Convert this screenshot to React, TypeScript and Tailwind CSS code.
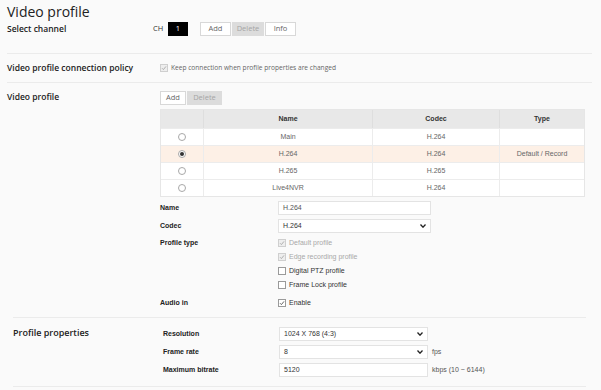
import React from 'react';

const sans = { fontFamily: '"Open Sans", "Noto Sans", sans-serif' };
const arial = { fontFamily: '"Liberation Sans", Arial, sans-serif' };

const Check: React.FC<{ checked?: boolean; disabled?: boolean }> = ({ checked, disabled }) => (
  <span
    className={`inline-flex items-center justify-center w-[8px] h-[8px] border ${
      disabled ? 'border-[#cfcfcf] bg-[#eeeeee]' : 'border-[#9a9a9a] bg-white'
    }`}
  >
    {checked && (
      <svg width="6" height="6" viewBox="0 0 6 6">
        <path d="M1 3.2 L2.4 4.6 L5 1.4" fill="none" stroke={disabled ? '#a8a8a8' : '#555'} strokeWidth="0.9" />
      </svg>
    )}
  </span>
);

const Radio: React.FC<{ on?: boolean }> = ({ on }) => (
  <span className="inline-flex items-center justify-center w-[8px] h-[8px] rounded-full border border-[#a8a8a8] bg-white">
    {on && <span className="w-[4px] h-[4px] rounded-full bg-[#333]" />}
  </span>
);

const Chevron = () => (
  <svg width="6" height="4" viewBox="0 0 6 4" className="ml-auto">
    <path d="M0.5 0.5 L3 3.2 L5.5 0.5" fill="none" stroke="#222" strokeWidth="1.3" />
  </svg>
);

const Btn: React.FC<{ label: string; disabled?: boolean; w: string }> = ({ label, disabled, w }) => (
  <span
    className={`inline-flex items-center justify-center h-[14px] ${w} text-[7.5px] border ${
      disabled ? 'bg-[#dcdcdc] border-[#dcdcdc] text-[#a5a5a5]' : 'bg-white border-[#d8d8d8] text-[#666]'
    }`}
    style={sans}
  >
    {label}
  </span>
);

const rows = [
  { name: 'Main', codec: 'H.264', type: '', on: false },
  { name: 'H.264', codec: 'H.264', type: 'Default / Record', on: true },
  { name: 'H.265', codec: 'H.265', type: '', on: false },
  { name: 'Live4NVR', codec: 'H.264', type: '', on: false },
];

const App: React.FC = () => {
  return (
    <div className="w-[601px] h-[390px] overflow-hidden bg-[#fafafa] text-[#222] pl-[7px] pr-[9px]">
      <h1 className="text-[14px] leading-[18px] pt-[3px] text-[#222]" style={sans}>Video profile</h1>

      {/* Select channel */}
      <div className="flex items-start h-[33px] border-b border-[#ebebeb]">
        <div className="w-[146px] text-[8.5px] font-semibold leading-[12px] mt-[2px]" style={sans}>Select channel</div>
        <div className="flex items-center mt-[1px] h-[14px]">
          <span className="text-[7.5px] text-[#333] w-[15px]" style={sans}>CH</span>
          <span className="w-[20px] h-[14px] bg-black text-white text-[7.5px] flex items-center justify-center" style={sans}>1</span>
          <span className="w-[12px]" />
          <Btn label="Add" w="w-[31px]" />
          <span className="w-[1px]" />
          <Btn label="Delete" w="w-[32px]" disabled />
          <span className="w-[1px]" />
          <Btn label="Info" w="w-[31px]" />
        </div>
      </div>

      {/* Connection policy */}
      <div className="flex items-center h-[29px] border-b border-[#ebebeb]">
        <div className="w-[153px] text-[8.5px] font-semibold" style={sans}>Video profile connection policy</div>
        <div className="flex items-center gap-[3px]">
          <Check checked disabled />
          <span className="text-[6.6px] text-[#666]" style={sans}>Keep connection when profile properties are changed</span>
        </div>
      </div>

      {/* Video profile */}
      <div className="flex pt-[8px] h-[234px]">
        <div className="w-[153px] text-[8.5px] font-semibold leading-[12px]" style={sans}>Video profile</div>
        <div className="flex flex-col">
          <div className="flex gap-[1px]">
            <Btn label="Add" w="w-[26px]" />
            <Btn label="Delete" w="w-[35px]" disabled />
          </div>
          <div className="mt-[4px] w-[425px] border border-[#e6e6e6] text-[7px]" style={arial}>
            <div className="flex h-[18px] bg-[#e8e8e8] font-bold text-[#333]">
              <div className="w-[43px] border-r border-[#dedede]" />
              <div className="w-[169px] border-r border-[#dedede] flex items-center justify-center">Name</div>
              <div className="w-[127px] border-r border-[#dedede] flex items-center justify-center">Codec</div>
              <div className="flex-1 flex items-center justify-center">Type</div>
            </div>
            {rows.map((r) => (
              <div
                key={r.name}
                className={`flex h-[17px] border-t border-[#ececec] text-[#666] ${r.on ? 'bg-[#fdf0e6]' : 'bg-white'}`}
              >
                <div className="w-[43px] border-r border-[#ececec] flex items-center justify-center"><Radio on={r.on} /></div>
                <div className="w-[169px] border-r border-[#ececec] flex items-center justify-center">{r.name}</div>
                <div className="w-[127px] border-r border-[#ececec] flex items-center justify-center">{r.codec}</div>
                <div className="flex-1 flex items-center justify-center">{r.type}</div>
              </div>
            ))}
          </div>

          <div className="flex flex-col mt-[4px] text-[7px]" style={arial}>
            <div className="flex items-center h-[14px]">
              <div className="w-[118px] font-bold">Name</div>
              <div className="w-[153px] h-[14px] border border-[#e3e3e3] bg-white flex items-center px-[4px] text-[#555]">H.264</div>
            </div>
            <div className="flex items-center h-[14px] mt-[4px]">
              <div className="w-[118px] font-bold">Codec</div>
              <div className="w-[153px] h-[14px] border border-[#e3e3e3] bg-white flex items-center px-[4px] text-[#333]">
                H.264<Chevron />
              </div>
            </div>
            <div className="flex mt-[3px]">
              <div className="w-[118px] font-bold leading-[14px]">Profile type</div>
              <div className="flex flex-col">
                {[
                  ['Default profile', true, true],
                  ['Edge recording profile', true, true],
                  ['Digital PTZ profile', false, false],
                  ['Frame Lock profile', false, false],
                ].map(([label, c, d]) => (
                  <div key={label as string} className="flex items-center gap-[3px] h-[14px]">
                    <Check checked={c as boolean} disabled={d as boolean} />
                    <span className={d ? 'text-[#a8a8a8]' : 'text-[#333]'}>{label as string}</span>
                  </div>
                ))}
              </div>
            </div>
            <div className="flex items-center h-[14px] mt-[4px]">
              <div className="w-[118px] font-bold">Audio in</div>
              <div className="flex items-center gap-[3px]">
                <Check checked />
                <span className="text-[#333]">Enable</span>
              </div>
            </div>
          </div>
        </div>
      </div>

      {/* Profile properties */}
      <div className="mx-[6px] border-t border-b border-[#ebebeb] flex pt-[9px] h-[70px]">
        <div className="w-[150px] text-[9px] font-semibold leading-[12px]" style={sans}>Profile properties</div>
        <div className="flex flex-col gap-[4px] text-[7px]" style={arial}>
          <div className="flex items-center h-[14px]">
            <div className="w-[116px] font-bold">Resolution</div>
            <div className="w-[149px] h-[14px] border border-[#e3e3e3] bg-white flex items-center px-[4px] text-[#333]">
              1024 X 768 (4:3)<Chevron />
            </div>
          </div>
          <div className="flex items-center h-[14px]">
            <div className="w-[116px] font-bold">Frame rate</div>
            <div className="w-[149px] h-[14px] border border-[#e3e3e3] bg-white flex items-center px-[4px] text-[#333]">
              8<Chevron />
            </div>
            <span className="ml-[4px] text-[#555]">fps</span>
          </div>
          <div className="flex items-center h-[14px]">
            <div className="w-[116px] font-bold">Maximum bitrate</div>
            <div className="w-[149px] h-[14px] border border-[#e3e3e3] bg-white flex items-center px-[4px] text-[#333]">5120</div>
            <span className="ml-[4px] text-[#555]">kbps (10 ~ 6144)</span>
          </div>
        </div>
      </div>
    </div>
  );
};

export default App;
